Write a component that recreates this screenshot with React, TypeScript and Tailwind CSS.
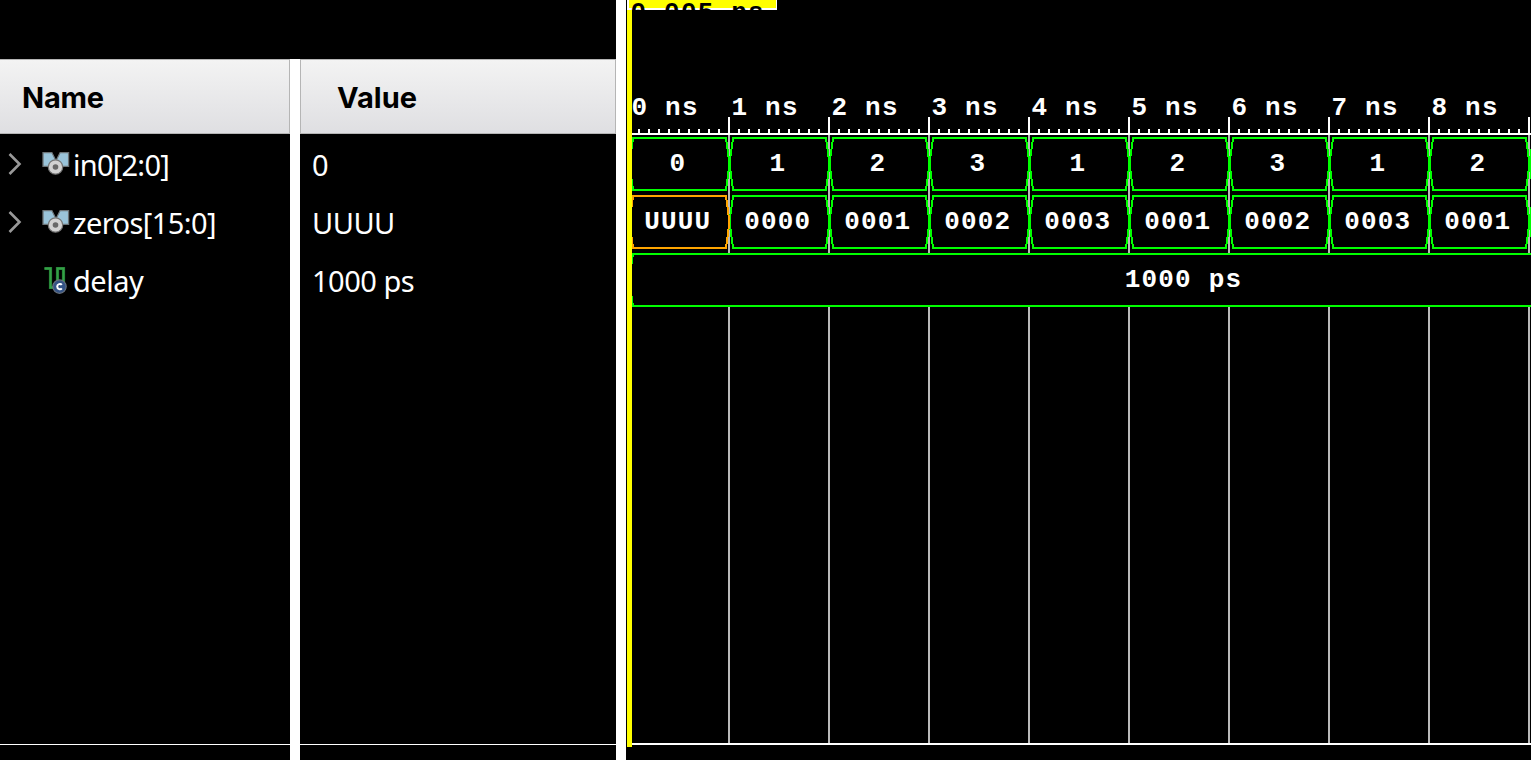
import React from "react";

const BIT_VALUES = ["0", "1", "2", "3", "1", "2", "3", "1", "2"];
const WORD_VALUES = ["UUUU", "0000", "0001", "0002", "0003", "0001", "0002", "0003", "0001"];
const ORIGIN = 629;
const STEP = 100;
const MONO = "font-['Liberation_Mono',monospace] text-[26px] tracking-[1.2px] font-bold";

function BusIcon() {
  return (
    <svg width="28" height="26" viewBox="0 0 28 26" className="shrink-0">
      <path d="M1 1.6h9l4 8 4-8h8.6v13.8H1z" fill="#9ac4da" stroke="#6d7478" strokeWidth="1.3" />
      <path d="M10.5 1h7L14 8z" fill="#000" />
      <circle cx="13.5" cy="16" r="7.2" fill="#d2d2d2" stroke="#747474" strokeWidth="1.2" />
      <circle cx="13.5" cy="16" r="2.8" fill="#686868" />
    </svg>
  );
}

function ConstantIcon() {
  return (
    <svg width="28" height="30" viewBox="0 0 28 30" className="shrink-0">
      <path d="M2.5 3.5H8.5V22.5H15.5V3.5H21.5V22" fill="none" stroke="#207a32" strokeWidth="3.2" />
      <path d="M2.5 3.5H8.5V22.5H15.5V3.5H21.5V22" fill="none" stroke="#35a047" strokeWidth="1.8" />
      <circle cx="17.5" cy="21.6" r="6.7" fill="#345386" stroke="#68717d" strokeWidth="1.2" />
      <path d="M19.8 19.9C18.6 18.3 15.2 18.8 15.2 21.6s3.4 3.3 4.6 1.7" fill="none" stroke="#fff" strokeWidth="2" />
    </svg>
  );
}

function Chevron() {
  return (
    <svg width="14" height="24" viewBox="0 0 14 24" className="shrink-0">
      <path d="M1.5 2 11.5 12 1.5 22" fill="none" stroke="#999" strokeWidth="2.6" />
    </svg>
  );
}

function SignalRow({ name, icon, expandable, className = "" }: { name: string; icon: React.ReactNode; expandable?: boolean; className?: string }) {
  return (
    <div className="flex h-[58px] items-center">
      <div className="flex w-[42px] shrink-0 pl-2 pt-[2px]">{expandable && <Chevron />}</div>
      <div className="flex w-[31px] shrink-0 pt-[2px]">{icon}</div>
      <span className={"whitespace-nowrap pt-[3px] " + className}>{name}</span>
    </div>
  );
}

function Header({ children, className }: { children: string; className: string }) {
  return (
    <div className={"flex h-[75px] items-center border-y border-r border-[#b5b5b5] bg-linear-to-b from-[#f3f3f3] to-[#dfdfe2] pt-[2px] font-bold text-black " + className}>
      {children}
    </div>
  );
}

function BusRow({ y, values }: { y: number; values: string[] }) {
  const mid = y + 26;
  const bottom = y + 52;
  const cells = [...values, ""].map((value, i) => ({ value, x: ORIGIN + i * STEP })).reverse();
  return (
    <g>
      {cells.map(({ value, x }) => (
        <g key={x}>
          <path
            d={`M${x + 0.5} ${mid}L${x + 4} ${y}H${x + 97}L${x + 100.5} ${mid}L${x + 97} ${bottom}H${x + 4}Z`}
            fill="none"
            stroke={value === "UUUU" ? "#ffa500" : "#00ff00"}
            strokeWidth="2"
            shapeRendering="crispEdges"
          />
          <text x={x + 48.8} y={y + 33} textAnchor="middle" fill="#fff" className={MONO}>
            {value}
          </text>
        </g>
      ))}
    </g>
  );
}

function Waveform() {
  const marks = Array.from({ length: 9 }, (_, i) => ORIGIN + STEP * (i + 1));
  const minor = Array.from({ length: 90 }, (_, i) => i).filter((i) => i % 10 !== 0);
  return (
    <svg width="905" height="760" viewBox="626 0 905 760" className="block shrink-0 bg-black">
      <defs>
        <clipPath id="label">
          <rect x="627" y="0" width="150" height="10" />
        </clipPath>
      </defs>
      <g shapeRendering="crispEdges">
        {marks.map((x) => (
          <g key={x}>
            <rect x={x - 1} y="135" width="2" height="608" fill="#b9b9b9" />
            <rect x={x - 1} y="117" width="2" height="16" fill="#fff" />
          </g>
        ))}
        {minor.map((i) => (
          <rect key={i} x={ORIGIN + i * 10 - 1} y="129" width="2" height="4" fill="#fff" />
        ))}
        <rect x="632" y="133" width="899" height="2" fill="#fff" />
        <rect x="632" y="743" width="899" height="2" fill="#fff" />
      </g>
      {BIT_VALUES.map((_, i) => (
        <text key={i} x={631.5 + i * STEP} y="115" fill="#fff" className={MONO} xmlSpace="preserve">
          {i + " ns"}
        </text>
      ))}
      <BusRow y={138} values={BIT_VALUES} />
      <BusRow y={196} values={WORD_VALUES} />
      <path d="M629 280L633 254H1540V306H633Z" fill="#000" stroke="#00ff00" strokeWidth="2" shapeRendering="crispEdges" />
      <text x="1183.5" y="287" textAnchor="middle" fill="#fff" className={MONO}>
        1000 ps
      </text>
      <g shapeRendering="crispEdges">
        <rect x="626" y="0" width="1" height="760" fill="#000" />
        <rect x="627" y="10" width="5" height="737" fill="#ff0" />
        <rect x="627" y="0" width="150" height="10" fill="#fff" />
        <rect x="629" y="0" width="147" height="8" fill="#ff0" />
      </g>
      <text x="630.5" y="20" fill="#000" clipPath="url(#label)" className={MONO}>
        0.005 ps
      </text>
    </svg>
  );
}

export default function App() {
  return (
    <main className="flex h-[760px] w-[1531px] overflow-hidden bg-black font-['Noto_Sans',sans-serif] text-[29px] leading-none text-white">
      <section className="flex w-[290px] shrink-0 flex-col pt-[59px]">
        <Header className="pl-[22px] font-['Inter',sans-serif] text-[29px] tracking-[-0.2px]">Name</Header>
        <div className="flex grow flex-col border-b border-white tracking-[-0.5px]">
          <SignalRow name="in0[2:0]" icon={<BusIcon />} expandable className="tracking-[-0.75px]" />
          <SignalRow name="zeros[15:0]" icon={<BusIcon />} expandable className="tracking-[-0.6px]" />
          <SignalRow name="delay" icon={<ConstantIcon />} />
        </div>
        <div className="h-[15px]" />
      </section>
      <div className="mt-[59px] w-[10px] shrink-0 bg-white" />
      <section className="flex w-[316px] shrink-0 flex-col pt-[59px]">
        <Header className="border-l pl-[36px] font-['Inter',sans-serif] text-[29px]">Value</Header>
        <div className="flex grow flex-col border-b border-white pl-[12px] tracking-[-0.5px]">
          {["0", "UUUU", "1000 ps"].map((value) => (
            <div key={value} className="flex h-[58px] items-center pt-[3px]">{value}</div>
          ))}
        </div>
        <div className="h-[15px]" />
      </section>
      <div className="w-[10px] shrink-0 bg-white" />
      <Waveform />
    </main>
  );
}
